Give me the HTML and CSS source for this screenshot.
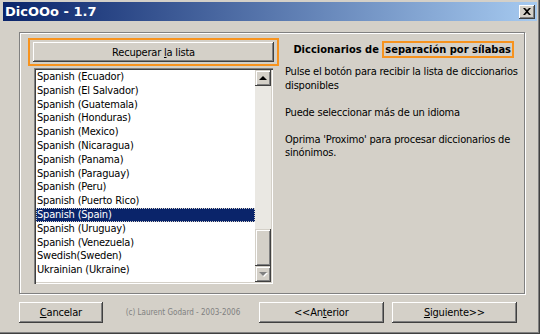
FILE: index.html
```html
<!DOCTYPE html>
<html>
<head>
    <title>DicOOo - 1.7</title>
    <link rel="stylesheet" href="styles.css">
</head>
<body>
    <div class="window">
        <div class="titlebar">
            <span class="title">DicOOo - 1.7</span>
            <button class="close">
                <svg width="8" height="7" viewBox="0 0 8 7"><path d="M0 0h2l2 2 2-2h2L5 3.5 8 7H6L4 5 2 7H0l3-3.5z" fill="#000"/></svg>
            </button>
        </div>

        <div class="content">
            <div class="group">
                <div class="left">
                    <div class="mark mark-btn">
                        <button class="btn wide">Recuperar <u>l</u>a lista</button>
                    </div>
                    <div class="listbox">
                        <ul class="items">
                            <li>Spanish (Ecuador)</li>
                            <li>Spanish (El Salvador)</li>
                            <li>Spanish (Guatemala)</li>
                            <li>Spanish (Honduras)</li>
                            <li>Spanish (Mexico)</li>
                            <li>Spanish (Nicaragua)</li>
                            <li>Spanish (Panama)</li>
                            <li>Spanish (Paraguay)</li>
                            <li>Spanish (Peru)</li>
                            <li>Spanish (Puerto Rico)</li>
                            <li class="selected">Spanish (Spain)</li>
                            <li>Spanish (Uruguay)</li>
                            <li>Spanish (Venezuela)</li>
                            <li>Swedish(Sweden)</li>
                            <li>Ukrainian (Ukraine)</li>
                        </ul>
                        <div class="scrollbar">
                            <div class="sb-btn"><span class="arrow up"></span></div>
                            <div class="track"></div>
                            <div class="thumb"></div>
                            <div class="sb-btn"><span class="arrow down"></span></div>
                        </div>
                    </div>
                </div>

                <div class="right">
                    <h1 class="heading">Diccionarios de <span class="mark">separación por sílabas</span></h1>
                    <p>Pulse el botón para recibir la lista de diccionarios disponibles</p>
                    <p>Puede seleccionar más de un idioma</p>
                    <p>Oprima 'Proximo' para procesar diccionarios de sinónimos.</p>
                </div>
            </div>

            <div class="footer">
                <button class="btn cancel"><u>C</u>ancelar</button>
                <span class="copy">(c) Laurent Godard - 2003-2006</span>
                <button class="btn nav">&lt;&lt;An<u>t</u>erior</button>
                <button class="btn nav"><u>S</u>iguiente&gt;&gt;</button>
            </div>
        </div>
    </div>
</body>
</html>
```

FILE: styles.css
```css
body {
    margin: 0;
    font-family: "DejaVu Sans Condensed", "DejaVu Sans", sans-serif;
    font-size: 11px;
    letter-spacing: -0.2px;
    color: #000;
    background-color: #d4d0c8;
}

.window {
    width: 540px;
    height: 334px;
    box-sizing: border-box;
    padding: 2px 3px 3px 3px;
    background-color: #d4d0c8;
    box-shadow: inset -1px -1px 0 #404040, inset -2px -2px 0 #808080;
}

.titlebar {
    height: 19px;
    display: flex;
    align-items: center;
    justify-content: space-between;
    padding: 0 2px 0 2px;
    background: linear-gradient(to right, #0a246a, #a6caf0);
}

.title {
    color: #fff;
    font-family: "DejaVu Sans", sans-serif;
    font-weight: bold;
    font-size: 13px;
    letter-spacing: 0;
}

.close {
    width: 16px;
    height: 14px;
    padding: 0;
    display: flex;
    align-items: center;
    justify-content: center;
    border: none;
    background-color: #d4d0c8;
    box-shadow: inset -1px -1px 0 #404040, inset 1px 1px 0 #fff, inset -2px -2px 0 #808080;
}

.content {
    padding: 11px 12px 0 16px;
}

.group {
    height: 262px;
    box-sizing: border-box;
    display: flex;
    padding: 5px 0 0 8px;
    border: 1px solid #808080;
    box-shadow: 1px 1px 0 #fff, inset 1px 1px 0 #fff;
}

.left {
    width: 251px;
}

.mark {
    border: 2px solid #f7931e;
}

.mark-btn {
    padding: 2px 3px;
}

.btn {
    font-family: inherit;
    font-size: 11px;
    letter-spacing: inherit;
    height: 21px;
    padding: 0;
    border: none;
    color: #000;
    background-color: #d4d0c8;
    box-shadow: inset -1px -1px 0 #404040, inset 1px 1px 0 #fff, inset -2px -2px 0 #808080;
}

.btn.wide {
    display: block;
    width: 241px;
    height: 20px;
}

.listbox {
    display: flex;
    width: 239px;
    height: 216px;
    margin: 2px 0 0 6px;
    box-sizing: border-box;
    padding: 2px;
    background-color: #fff;
    box-shadow: inset 1px 1px 0 #808080, inset 2px 2px 0 #404040, inset -1px -1px 0 #fff, inset -2px -2px 0 #d4d0c8;
}

.items {
    flex: 1;
    list-style: none;
    margin: 0;
    padding: 0;
    overflow: hidden;
}

.items li {
    height: 13.8px;
    line-height: 13.8px;
    padding-left: 1px;
    white-space: nowrap;
}

.items li.selected {
    color: #fff;
    background-color: #0a246a;
    outline: 1px dotted #d4d0c8;
    outline-offset: -1px;
}

.scrollbar {
    width: 16px;
    display: flex;
    flex-direction: column;
}

.sb-btn, .thumb {
    height: 16px;
    display: flex;
    align-items: center;
    justify-content: center;
    background-color: #d4d0c8;
    box-shadow: inset -1px -1px 0 #404040, inset 1px 1px 0 #d4d0c8, inset 2px 2px 0 #fff, inset -2px -2px 0 #808080;
}

.thumb {
    height: 37px;
}

.track {
    flex: 1;
    background-color: #eae8e3;
}

.arrow {
    width: 0;
    height: 0;
    border-left: 4px solid transparent;
    border-right: 4px solid transparent;
}

.arrow.up {
    border-bottom: 4px solid #000;
}

.arrow.down {
    border-top: 4px solid #808080;
    filter: drop-shadow(1px 1px 0 #fff);
}

.right {
    flex: 1;
    padding: 5px 2px 0 6px;
}

.heading {
    margin: 0 8px 9px 0;
    font-size: 11px;
    font-weight: bold;
    letter-spacing: 0;
    text-align: right;
}

.heading .mark {
    padding: 0 1px;
}

.right p {
    margin: 0 0 13.5px 0;
    line-height: 13.5px;
}

.footer {
    display: flex;
    align-items: center;
    margin-top: 8px;
}

.btn.cancel {
    width: 85px;
}

.copy {
    width: 158px;
    padding-left: 23px;
    box-sizing: border-box;
    font-size: 8px;
    letter-spacing: 0;
    color: #808080;
}

.btn.nav {
    width: 127px;
    margin-right: 8px;
}
```
